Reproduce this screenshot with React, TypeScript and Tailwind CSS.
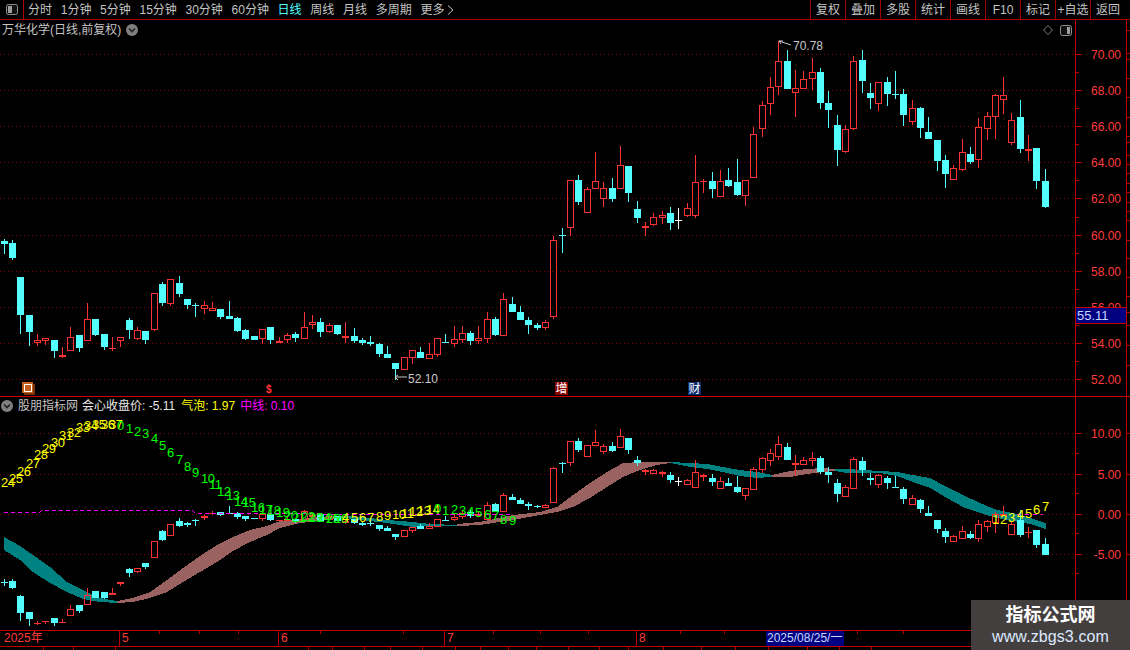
type Candle = [number, number, number, number, 'c' | 'r' | 'w'];

const UP = '#ff3232';
const DOWN = '#54ffff';
const AXIS = '#c00000';

const upperCandles: Candle[] = [
  [239,241,244,254,'c'],[240,243,258,260,'c'],[277,277,315,334,'c'],[315,315,332,346,'c'],[334,340,343,346,'r'],
  [338,338,341,345,'r'],[340,340,351,358,'c'],[347,355,357,358,'r'],[327,337,351,351,'r'],[335,335,348,352,'c'],
  [303,319,341,341,'r'],[319,319,335,336,'c'],[334,334,347,350,'c'],[337,348,349,351,'r'],[337,337,341,347,'r'],
  [318,320,330,339,'c'],[327,330,339,340,'r'],[331,331,340,344,'c'],[293,293,330,331,'r'],[282,284,303,306,'c'],
  [279,279,304,306,'r'],[276,283,294,297,'c'],[299,299,305,309,'c'],[303,305,306,317,'c'],[301,305,309,314,'r'],
  [302,308,311,311,'r'],[309,309,317,319,'c'],[301,316,319,319,'c'],[317,318,331,332,'c'],[329,330,339,340,'c'],
  [336,336,340,340,'c'],[329,329,339,344,'r'],[327,327,340,344,'c'],[337,341,343,343,'r'],[333,335,340,343,'r'],
  [332,334,338,342,'c'],[312,327,339,339,'r'],[315,322,325,329,'r'],[318,322,332,337,'c'],[323,325,332,333,'r'],
  [325,325,334,335,'c'],[322,336,338,343,'r'],[328,336,341,343,'c'],[338,340,343,345,'c'],[336,342,344,346,'c'],
  [343,344,354,357,'c'],[346,354,358,358,'c'],[363,363,369,380,'c'],[357,357,370,370,'r'],[350,350,358,364,'r'],
  [347,352,358,358,'c'],[343,354,359,359,'r'],[338,338,355,357,'r'],[334,342,343,343,'c'],[326,339,344,347,'r'],
  [326,333,340,343,'r'],[331,333,341,345,'c'],[326,338,341,344,'r'],[312,319,339,343,'r'],[317,319,335,336,'c'],
  [293,299,336,336,'r'],[297,304,312,312,'c'],[306,312,320,320,'c'],[317,320,325,334,'c'],[323,325,328,330,'c'],
  [320,322,328,330,'r'],[236,240,317,319,'r'],[228,235,236,253,'c'],[180,180,228,236,'r'],[175,180,202,205,'c'],
  [187,189,213,213,'r'],[152,181,189,189,'r'],[182,188,199,207,'r'],[178,188,199,202,'c'],[146,165,189,189,'r'],
  [166,166,193,202,'c'],[201,209,218,223,'c'],[222,226,228,236,'r'],[213,217,225,226,'r'],[211,215,218,224,'r'],
  [207,213,223,230,'c'],[208,220,221,229,'w'],[203,208,216,217,'r'],[155,182,216,218,'r'],[179,181,182,193,'r'],
  [172,181,189,198,'c'],[170,181,197,197,'r'],[168,180,186,187,'c'],[159,182,195,196,'c'],[180,180,196,206,'r'],
  [127,134,178,178,'r'],[101,105,129,137,'r'],[77,87,104,115,'r'],[41,61,87,95,'r'],[50,61,89,89,'c'],
  [70,88,93,117,'r'],[71,79,89,89,'r'],[58,72,79,90,'r'],[68,72,103,109,'c'],[91,103,110,128,'c'],
  [115,125,150,166,'c'],[125,129,152,153,'r'],[56,61,129,130,'r'],[50,60,81,93,'c'],[83,93,98,109,'c'],
  [82,82,104,111,'r'],[77,82,94,106,'c'],[71,94,95,99,'c'],[89,94,115,126,'c'],[100,108,122,125,'r'],
  [107,108,128,138,'c'],[117,132,139,139,'c'],[140,140,161,171,'c'],[155,160,174,188,'c'],[165,168,180,180,'r'],
  [139,152,170,171,'r'],[147,154,162,164,'c'],[118,127,160,168,'r'],[112,116,129,140,'r'],[94,95,117,139,'r'],
  [77,95,100,114,'r'],[113,120,143,145,'r'],[100,117,149,153,'c'],[135,149,151,161,'r'],[148,148,181,189,'c'],
  [169,181,207,208,'c'],
];

const lowerCandles: Candle[] = [
  [579,582,583,586,'c'],[579,581,588,589,'c'],[595,596,613,621,'c'],[612,612,619,626,'c'],[621,623,624,625,'r'],
  [621,621,622,624,'r'],[618,618,623,626,'c'],[619,622,623,623,'r'],[605,609,616,616,'r'],[605,605,611,613,'c'],
  [588,595,605,605,'r'],[591,591,598,598,'c'],[592,592,598,599,'c'],[588,593,595,595,'r'],[582,582,584,586,'r'],
  [568,569,573,577,'c'],[568,568,572,573,'r'],[563,563,567,569,'c'],[541,541,558,558,'r'],[530,531,540,541,'c'],
  [524,524,536,536,'r'],[518,521,526,527,'c'],[522,523,525,527,'c'],[519,520,521,526,'c'],[515,516,518,520,'r'],
  [511,513,514,515,'r'],[512,512,515,516,'c'],[506,513,514,514,'c'],[512,513,517,519,'c'],[516,516,519,521,'c'],
  [518,518,519,519,'c'],[514,514,519,521,'r'],[514,514,520,521,'c'],[520,520,521,521,'r'],[517,519,521,521,'r'],
  [519,519,521,523,'c'],[510,511,521,521,'r'],[513,515,517,518,'r'],[514,514,521,521,'c'],[515,516,520,520,'r'],
  [516,516,521,521,'c'],[519,521,523,524,'r'],[519,519,523,524,'c'],[522,523,525,526,'c'],[521,523,524,526,'c'],
  [525,525,529,531,'c'],[526,528,531,531,'c'],[534,534,537,540,'c'],[530,530,537,537,'r'],[527,527,531,533,'r'],
  [524,526,529,529,'c'],[523,526,529,529,'r'],[519,519,527,527,'r'],[516,520,521,521,'c'],[513,517,520,521,'r'],
  [511,513,517,519,'r'],[510,512,516,518,'c'],[511,514,516,517,'r'],[502,505,520,520,'r'],[503,504,512,512,'c'],
  [493,495,512,512,'r'],[494,497,500,500,'c'],[498,500,504,504,'c'],[502,504,506,510,'c'],[505,506,507,508,'c'],
  [504,505,508,508,'r'],[467,468,503,503,'r'],[462,463,464,473,'c'],[441,441,463,466,'r'],[438,441,450,452,'c'],
  [445,445,457,457,'r'],[430,442,446,446,'r'],[444,446,452,454,'r'],[442,446,451,452,'c'],[429,436,448,448,'r'],
  [438,438,450,454,'c'],[456,460,463,466,'c'],[469,470,472,475,'r'],[469,470,474,474,'r'],[471,472,474,477,'r'],
  [472,475,480,483,'c'],[477,481,482,486,'w'],[479,480,485,485,'r'],[460,472,488,488,'r'],[474,475,477,481,'r'],
  [474,478,482,486,'c'],[477,481,489,489,'r'],[478,483,486,486,'c'],[476,487,492,493,'c'],[488,488,496,500,'r'],
  [467,469,490,490,'r'],[457,458,470,473,'r'],[449,453,461,466,'r'],[436,444,457,460,'r'],[443,447,460,460,'c'],
  [455,463,465,476,'r'],[457,460,465,465,'r'],[452,458,461,466,'r'],[456,458,472,474,'c'],[467,472,475,483,'c'],
  [479,483,494,502,'c'],[485,487,497,497,'r'],[457,459,489,489,'r'],[457,461,470,476,'c'],[473,478,480,485,'c'],
  [474,475,485,488,'r'],[476,478,483,489,'c'],[476,487,488,488,'c'],[487,489,499,504,'c'],[495,498,505,505,'r'],
  [499,500,509,513,'c'],[506,513,516,516,'c'],[520,520,529,533,'c'],[528,531,537,543,'c'],[535,536,542,542,'r'],
  [526,531,539,539,'r'],[531,534,538,539,'c'],[520,524,539,542,'r'],[520,521,527,532,'r'],[512,514,523,533,'r'],
  [506,514,516,516,'r'],[521,524,535,535,'r'],[510,520,535,537,'c'],[527,532,533,538,'r'],[530,530,545,548,'c'],
  [538,544,555,555,'c'],
];

// x, top, bottom of the cloud between the two averages
const tealA = [[4,537,550],[20,546,560],[33,555,572],[50,567,583],[67,582,592],[83,590,599],[100,598,602],[117,601,603]];
const roseA = [[117,601,603],[133,598,602],[150,592,598],[167,580,592],[183,568,582],[200,556,572],[217,545,562],[233,537,551],[250,530,542],[267,526,535],[280,521,528],[300,519,523],[320,517,521],[345,516,518]];
const tealB = [[345,516,518],[362,517,520],[387,520,523],[413,522,527],[430,524,526],[457,525,526]];
const roseB = [[457,524,526],[480,522,525],[513,515,520],[540,512,515],[557,507,512],[573,495,507],[590,483,498],[607,472,487],[623,463,477],[640,462,470],[657,462,465],[670,462,463]];
const tealC = [[670,462,463],[690,463,467],[707,464,469],[723,467,472],[740,470,476],[757,472,478],[772,475,477]];
const roseC = [[772,475,477],[790,471,477],[807,469,474],[823,468,472],[835,469,471]];
const tealD = [[835,469,471],[847,469,473],[863,470,473],[880,471,473],[897,472,476],[913,475,482],[930,478,488],[947,487,498],[963,495,507],[980,503,513],[997,510,518],[1013,513,521],[1030,518,524],[1046,523,529]];

const counts: [number, string, number, string][] = [
  ...[482,478,471,463,454,448,442,435,432,427,425,424,424,424].map((y, i): [number, string, number, string] => [i, String(24 + i), y, '#ffff00']),
  ...[425,428,431,433,438,445,452,459,466,472,478,484,491,495,501,502,507,509,510,512,515,517,516,517,517,518,518].map((y, i): [number, string, number, string] => [14 + i, String(i), y, '#00ff00']),
  ...[517,517,517,517,516,515,514,513,511,510,509].map((y, i): [number, string, number, string] => [41 + i, String(4 + i), y, '#ffff00']),
  ...[508,510,509,510,511,512,514,515,519,520].map((y, i): [number, string, number, string] => [52 + i, String(i), y, '#00ff00']),
  ...[519,519,517,514,513,509,506].map((y, i): [number, string, number, string] => [119 + i, String(1 + i), y, '#ffff00']),
];

const centerX = (i: number) => Math.floor(4.3 + i * 8.328);

const Candles = ({ data }: { data: Candle[] }) => (
  <g shapeRendering="crispEdges">
    {data.map(([high, top, bottom, low, kind], i) => {
      const x = centerX(i);
      const color = kind === 'c' ? DOWN : kind === 'r' ? UP : '#ffffff';
      const thin = bottom - top <= 2;
      return (
        <g key={i}>
          {high < top && <rect x={x} y={high} width={1} height={top - high} fill={color} />}
          {low > bottom && <rect x={x} y={bottom} width={1} height={low - bottom} fill={color} />}
          {kind === 'c' || kind === 'w' || thin ? (
            <rect x={x - 3} y={top} width={7} height={kind === 'w' ? 1 : Math.max(bottom - top, 1)} fill={color} />
          ) : (
            <rect x={x - 2.5} y={top + 0.5} width={6} height={bottom - top - 1} fill="none" stroke={color} />
          )}
        </g>
      );
    })}
  </g>
);

const Ribbon = ({ points, color }: { points: number[][]; color: string }) => (
  <polygon
    fill={color}
    shapeRendering="crispEdges"
    points={[...points.map(([x, t]) => `${x},${t}`), ...[...points].reverse().map(([x, , b]) => `${x},${b}`)].join(' ')}
  />
);

const GridLines = ({ rows }: { rows: number[] }) => (
  <g>
    {rows.map((y) => (
      <line key={y} x1={0} x2={1075} y1={y + 0.5} y2={y + 0.5} stroke="#7c0000" strokeDasharray="1 3" />
    ))}
  </g>
);

const RoundChevron = () => (
  <svg width="12" height="12" viewBox="0 0 12 12" className="shrink-0">
    <circle cx="6" cy="6" r="6" fill="#808080" />
    <path d="M3 4.5 6 7.5 9 4.5" fill="none" stroke="#222222" strokeWidth="1.6" />
  </svg>
);

const PanelToggle = ({ side }: { side: 'left' | 'right' }) => (
  <svg width="12" height="11" viewBox="0 0 12 11" className="shrink-0">
    <rect x="0.5" y="0.5" width="11" height="10" rx="2" fill="#111111" stroke="#909090" />
    <rect x={side === 'left' ? 2 : 7} y="2" width={side === 'left' ? 4 : 3} height="7" fill="#a0a0a0" />
  </svg>
);

const Axis = ({ viewBox, height, labels, minors, children }: {
  viewBox: string;
  height: string;
  labels: [number, string][];
  minors: number[];
  children?: React.ReactNode;
}) => (
  <div className={`relative flex w-[52px] shrink-0 border-x border-[#c00000] ${height}`}>
    <svg viewBox={viewBox} className="block h-full w-[50px]">
      <g shapeRendering="crispEdges">
        {labels.map(([y]) => <rect key={y} x={1076} y={y} width={6} height={1} fill={AXIS} />)}
        {minors.map((y) => <rect key={y} x={1076} y={y} width={3} height={1} fill={AXIS} />)}
      </g>
      {labels.map(([y, text]) => (
        <text key={y} x={1121} y={y + 5} textAnchor="end" fontSize="12" fill="#ff3c3c">{text}</text>
      ))}
    </svg>
    {children}
  </div>
);

const EdgeTicks = ({ viewBox, rows, height }: { viewBox: string; rows: number[]; height: string }) => (
  <svg viewBox={viewBox} className={`block w-[3px] shrink-0 ${height}`}>
    <g shapeRendering="crispEdges">
      {rows.map((y) => <rect key={y} x={0} y={y} width={3} height={1} fill={AXIS} />)}
    </g>
  </svg>
);

const tabs = ['分时', '1分钟', '5分钟', '15分钟', '30分钟', '60分钟', '日线', '周线', '月线', '多周期'];
const actions = ['复权', '叠加', '多股', '统计', '画线', 'F10', '标记', '+自选', '返回'];

const App = () => {
  return (
    <div className="relative flex h-[650px] w-[1130px] flex-col overflow-hidden bg-black text-xs [font-family:'Liberation_Sans','Noto_Sans_CJK_SC',sans-serif]">
      {/* top toolbar */}
      <div className="flex h-5 shrink-0 items-center border-b border-[#b00000] text-[#c4c4c4]">
        <div className="flex h-full w-6 shrink-0 items-center justify-center border-r border-[#b00000]">
          <PanelToggle side="left" />
        </div>
        <div className="ml-[4px] flex items-center gap-[8.7px]">
          {tabs.map((tab) => (
            <span key={tab} className={tab === '日线' ? 'text-[#54ffff]' : ''}>{tab}</span>
          ))}
          <span className="flex items-center gap-[3px]">
            更多
            <svg width="7" height="10" viewBox="0 0 7 10">
              <path d="M1 .5 6 5 1 9.500" fill="none" stroke="#c4c4c4" />
            </svg>
          </span>
        </div>
        <div className="ml-auto mr-[5px] flex h-full">
          {actions.map((action) => (
            <span key={action} className="flex h-full w-[35px] items-center justify-center border-l border-[#a00000]">{action}</span>
          ))}
        </div>
      </div>

      {/* price pane */}
      <div className="flex shrink-0 border-b border-[#d00000]">
        <div className="relative h-[376px] w-[1075px] shrink-0">
          <svg viewBox="0 20 1075 376" className="block h-full w-full">
            <GridLines rows={[54,90,126,162,198,235,271,307,343,379]} />
            <Candles data={upperCandles} />
            <path d="M779 41 791 45M779 41l4 0M779 41l2 3" fill="none" stroke="#c8c8c8" />
            <text x={793} y={50} fontSize="12" fill="#c8c8c8">70.78</text>
            <path d="M395 377H407M395 377l3-2M395 377l3 3" fill="none" stroke="#c8c8c8" />
            <text x={408} y={383} fontSize="12" fill="#c8c8c8">52.10</text>
            <g shapeRendering="crispEdges">
              <rect x={24} y={384} width={11} height={11} fill="#7a3208" />
              <rect x={22} y={382} width={11} height={11} fill="#c0601c" />
              <rect x={24.500} y={384.500} width={7} height={7} fill="none" stroke="#ffffff" />
              <rect x={26} y={386} width={4} height={4} fill="#c0601c" />
            </g>
            <path d="M269 384v3" stroke={UP} />
            <text x={266} y={393} fontSize="10" fontWeight="700" fill={UP}>$</text>
          </svg>
          <div className="absolute inset-x-0 top-0 flex items-center justify-between pl-[2px] pr-[3px] pt-[2px] text-[#c4c4c4]">
            <div className="flex items-center gap-[5px]">
              <span>万华化学(日线,前复权)</span>
              <RoundChevron />
            </div>
            <div className="flex items-center gap-[7px]">
              <svg width="10" height="10" viewBox="0 0 10 10">
                <path d="M5 .5 9.500 5 5 9.500 .5 5Z" fill="none" stroke="#808080" />
              </svg>
              <PanelToggle side="right" />
            </div>
          </div>
          <span className="absolute left-[555px] top-[362px] flex h-[13px] w-[13px] items-center justify-center bg-[#8b0000] text-white">增</span>
          <span className="absolute left-[688px] top-[362px] flex h-[13px] w-[13px] items-center justify-center bg-[#0c2c70] text-white">财</span>
        </div>
        <Axis
          viewBox="1076 20 50 376"
          height="h-[376px]"
          labels={[[54,'70.00'],[90,'68.00'],[126,'66.00'],[162,'64.00'],[198,'62.00'],[235,'60.00'],[271,'58.00'],[307,'56.00'],[343,'54.00'],[379,'52.00']]}
          minors={[72,108,144,180,217,253,289,325,361]}
        >
          <div className="absolute inset-x-0 top-[287px] h-[17px] border-y border-[#c00000] bg-[#000080] pl-[1px] text-[13px] leading-[15px] text-[#c8d8ff]">55.11</div>
        </Axis>
        <EdgeTicks
          viewBox="0 20 3 376"
          height="h-[376px]"
          rows={[30,53,59,78,97,117,136,142,155,164,173,183,192,202,211,220,240,258,277,296,312,325,345,365]}
        />
      </div>

      {/* indicator pane */}
      <div className="flex shrink-0">
        <div className="relative h-[233px] w-[1075px] shrink-0">
          <svg viewBox="0 397 1075 233" className="block h-full w-full">
            <GridLines rows={[433,474,514,554]} />
            <Ribbon points={tealA} color="#008282" />
            <Ribbon points={roseA} color="#9b6262" />
            <Ribbon points={tealB} color="#008282" />
            <Ribbon points={roseB} color="#9b6262" />
            <Ribbon points={tealC} color="#008282" />
            <Ribbon points={roseC} color="#9b6262" />
            <Ribbon points={tealD} color="#008282" />
            <Candles data={lowerCandles} />
            <polyline
              points="4,512 40,512 42,510 167,510 193,511 195,513 300,513 320,514 510,514"
              fill="none"
              stroke="#ff00ff"
              strokeDasharray="4 3"
              shapeRendering="crispEdges"
            />
            <line x1={1017} x2={1043} y1={514.5} y2={514.5} stroke="#ff00ff" strokeDasharray="4 4" />
            {counts.map(([i, text, y, color]) => (
              <text key={i} x={centerX(i) - 3} y={y + 5} fontSize="13" letterSpacing="-0.5" fill={color}>{text}</text>
            ))}
          </svg>
          <div className="absolute left-0 top-[1px] flex items-center whitespace-pre pl-[1px]">
            <RoundChevron />
            <span className="ml-[5px] text-[#c4c4c4]">股朋指标网</span>
            <span className="ml-[4px] text-[#e8e8e8]">会心收盘价: -5.11</span>
            <span className="ml-[6px] text-[#ffff00]">气泡: 1.97</span>
            <span className="ml-[5px] text-[#ff00ff]">中线: 0.10</span>
          </div>
        </div>
        <Axis
          viewBox="1076 397 50 233"
          height="h-[233px]"
          labels={[[433,'10.00'],[474,'5.00'],[514,'0.00'],[554,'-5.00']]}
          minors={[453,493,533,573]}
        />
        <EdgeTicks viewBox="0 397 3 233" height="h-[233px]" rows={[433,474,514,554]} />
      </div>

      {/* date axis */}
      <div className="relative flex h-[17px] w-[1130px] shrink-0 border-y border-[#c00000] text-[#ff3c3c]">
        <span className="w-[119px] pl-[4px] leading-[15px]">2025年</span>
        <span className="w-[159px] border-l border-[#c00000] pl-[2px] leading-[15px]">5</span>
        <span className="w-[166px] border-l border-[#c00000] pl-[2px] leading-[15px]">6</span>
        <span className="w-[192px] border-l border-[#c00000] pl-[2px] leading-[15px]">7</span>
        <span className="w-[130px] border-l border-[#c00000] pl-[2px] leading-[15px]">8</span>
        <span className="w-[78px] bg-[#000080] pl-[1px] leading-[15px] text-[#c8d8ff]">2025/08/25/一</span>
        <svg viewBox="0 0 1130 3" className="absolute left-0 top-0 h-[3px] w-[1130px]">
          <g shapeRendering="crispEdges">
            {[159,199,238,320,403,493,540,588,680,724,857,903].map((x) => <rect key={x} x={x} y={0} width={1} height={3} fill={AXIS} />)}
          </g>
        </svg>
      </div>
      <svg viewBox="0 0 1130 3" className="block h-[3px] w-[1130px] shrink-0">
        <g shapeRendering="crispEdges">
          {[43,73,115,308,332,364,390,422,455,480,508,536,568,599,628,663,701,735,768,807,839,871].map((x) => <rect key={x} x={x} y={0} width={1} height={3} fill={AXIS} />)}
        </g>
      </svg>

      {/* site watermark */}
      <div className="absolute bottom-0 right-0 flex h-[50px] w-[159px] flex-col items-center justify-center bg-[#443f3f]">
        <span className="text-[18px] font-bold leading-[24px] text-white">指标公式网</span>
        <span className="text-base leading-[20px] tracking-[0.1px] text-[#dcebff]">www.zbgs3.com</span>
      </div>
    </div>
  );
};

export default App;
